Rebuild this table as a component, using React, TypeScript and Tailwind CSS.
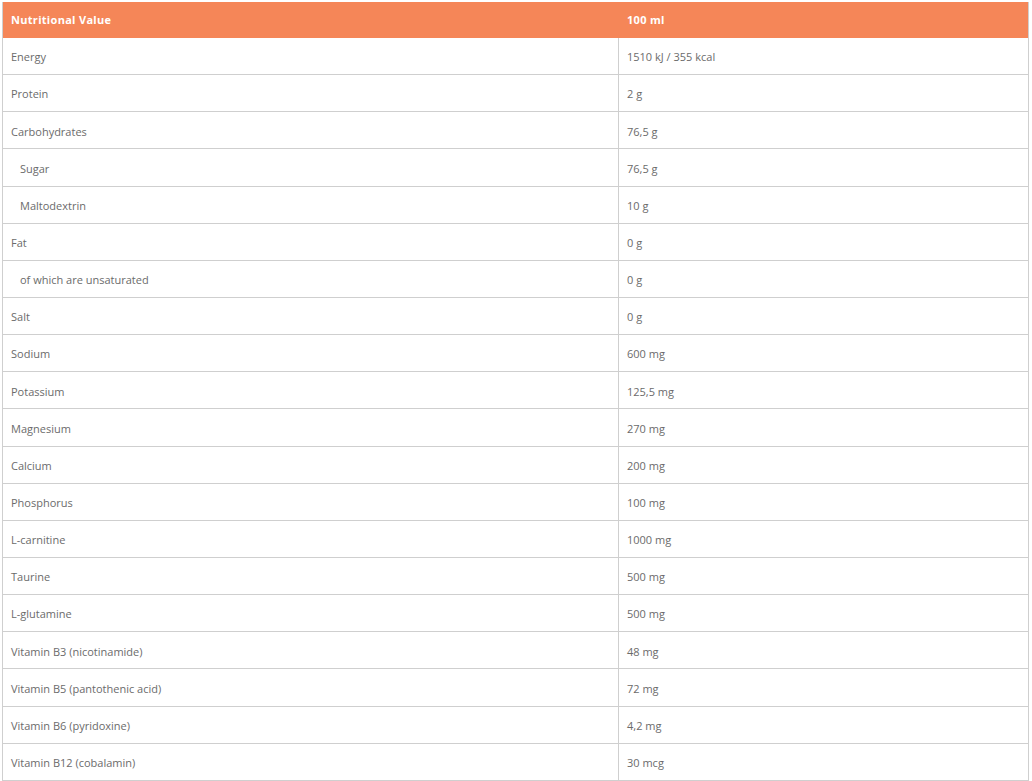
const rows: { name: string; value: string; sub?: boolean }[] = [
  { name: "Energy", value: "1510 kJ / 355 kcal" },
  { name: "Protein", value: "2 g" },
  { name: "Carbohydrates", value: "76,5 g" },
  { name: "Sugar", value: "76,5 g", sub: true },
  { name: "Maltodextrin", value: "10 g", sub: true },
  { name: "Fat", value: "0 g" },
  { name: "of which are unsaturated", value: "0 g", sub: true },
  { name: "Salt", value: "0 g" },
  { name: "Sodium", value: "600 mg" },
  { name: "Potassium", value: "125,5 mg" },
  { name: "Magnesium", value: "270 mg" },
  { name: "Calcium", value: "200 mg" },
  { name: "Phosphorus", value: "100 mg" },
  { name: "L-carnitine", value: "1000 mg" },
  { name: "Taurine", value: "500 mg" },
  { name: "L-glutamine", value: "500 mg" },
  { name: "Vitamin B3 (nicotinamide)", value: "48 mg" },
  { name: "Vitamin B5 (pantothenic acid)", value: "72 mg" },
  { name: "Vitamin B6 (pyridoxine)", value: "4,2 mg" },
  { name: "Vitamin B12 (cobalamin)", value: "30 mcg" },
];

export default function App() {
  return (
    <div className="bg-white pt-[2px] pl-[2px] min-h-screen" style={{ fontFamily: '"Open Sans", sans-serif' }}>
      <div className="w-[1027px] border-l border-r border-[#cfcfcf]">
        <div className="flex h-[36px] items-center bg-[#f58658] text-[11px] font-bold tracking-[0.3px] text-white">
          <div className="w-[616px] pl-[8px]">Nutritional Value</div>
          <div className="pl-[8px]">100 ml</div>
        </div>
        {rows.map((r) => (
          <div key={r.name} className="flex h-[37.15px] border-b border-[#cfcfcf] text-[11px] text-[#6b6b6b]">
            <div className={`flex w-[616px] items-center border-r border-[#cfcfcf] pt-[3px] ${r.sub ? "pl-[17px]" : "pl-[8px]"}`}>
              {r.name}
            </div>
            <div className="flex items-center pl-[8px] pt-[3px]">{r.value}</div>
          </div>
        ))}
      </div>
    </div>
  );
}
